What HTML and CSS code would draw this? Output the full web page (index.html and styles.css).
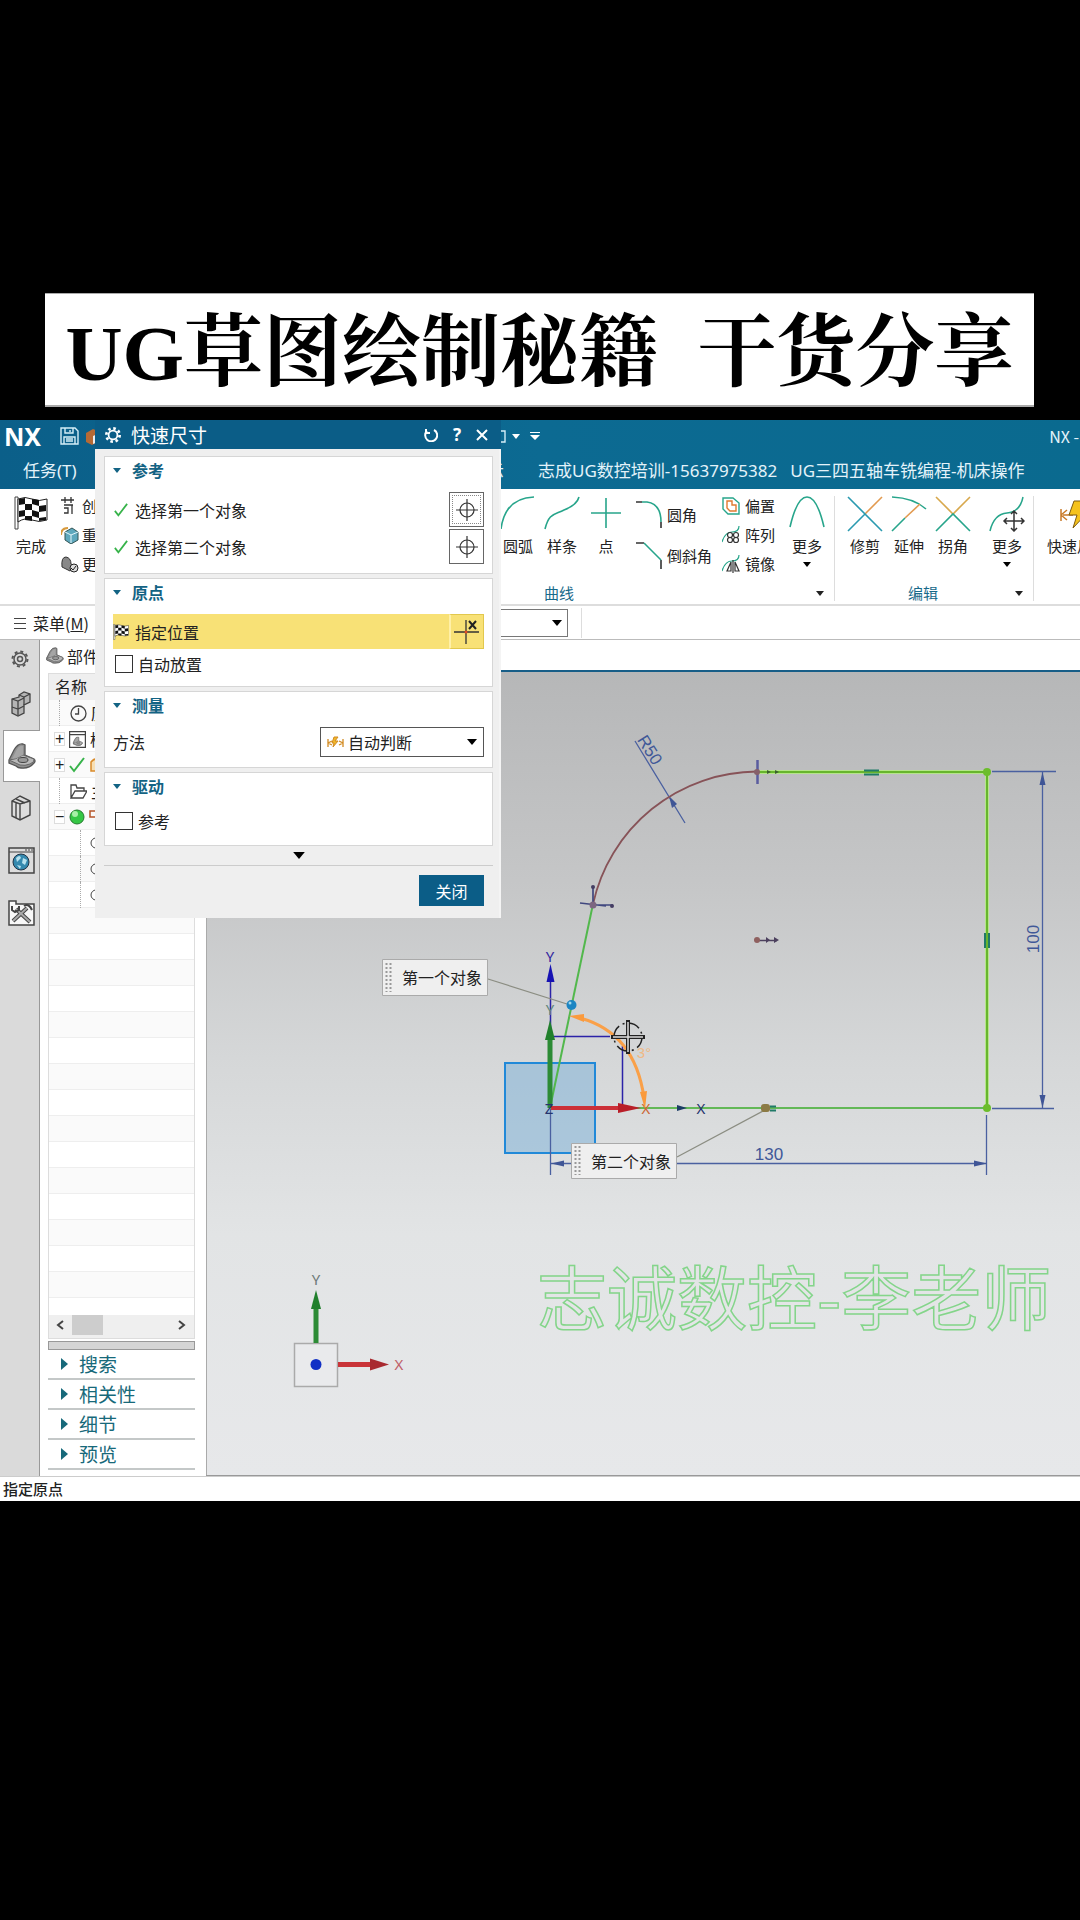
FILE: index.html
```html
<!DOCTYPE html>
<html lang="zh-CN">
<head>
<meta charset="utf-8">
<meta name="viewport" content="width=device-width, initial-scale=1">
<title>UG草图绘制秘籍</title>
<link rel="stylesheet" href="styles.css">
</head>
<body>
<svg class="defs" aria-hidden="true">
  <defs>
    <symbol id="tri-down" viewBox="0 0 10 6"><path d="M0 0h10L5 6z"/></symbol>
    <symbol id="tri-right" viewBox="0 0 7 12"><path d="M0 0v12L7 6z"/></symbol>
    <symbol id="flag" viewBox="0 0 34 34">
      <path d="M1 1h3v32H1z" fill="#fff" stroke="#444"/>
      <path d="M4 3q7-3 14 0t15 0v21q-8 3-15 0T4 26z" fill="#fff" stroke="#222"/>
      <path d="M5 3l6-1v6l-6 1zM18 3l7 1v6l-7-2zM11 8l7 0v6l-7 0zM25 10l7-1v6l-7 1zM5 15l6-1v6l-6 1zM18 14l7 2v6l-7-2zM11 20l7 0v5l-7-1zM25 22l7-1v3l-7 1z" fill="#111"/>
    </symbol>
    <symbol id="check" viewBox="0 0 16 16"><path d="M1 9l4 5L15 1" fill="none" stroke="#37b34a" stroke-width="2"/></symbol>
    <symbol id="target" viewBox="0 0 22 22"><g fill="none" stroke="#333" stroke-width="1.2"><circle cx="11" cy="11" r="7"/><path d="M11 0v22M0 11h22"/></g></symbol>
    <symbol id="part" viewBox="0 0 28 26">
      <path d="M1 17L6 7q4-7 9-6l2 1v10l9 4q2 2 0 4-5 6-13 5-3 0-5-2l-7-3z" fill="#8f8f8f" stroke="#555" stroke-width="1.300"/>
      <path d="M1 17q6 0 14-5l11 4q1 3-4 5t-10 1z" fill="#b9b9b9" stroke="#666"/>
      <path d="M4 16L8 8q3-6 7-5v9q-5 3-11 4z" fill="#a5a5a5"/>
      <ellipse cx="15" cy="17" rx="5" ry="2.500" fill="#999" stroke="#444"/>
    </symbol>
  </defs>
</svg>

<header class="banner"><h1>UG草图绘制秘籍  干货分享</h1></header>

<main class="app">
  <div class="titlebar">
    <strong class="logo">NX</strong>
    <button class="bare" aria-label="保存"><svg width="19" height="18" viewBox="0 0 19 18" fill="none" stroke="#d5eef8" stroke-width="1.4"><path d="M1 1h14l3 3v13H1zM5 1v5h8V1M4 17v-7h11v7M6 12h7M6 14h7M10 3v2"/></svg></button>
    <svg class="cube" width="14" height="18" viewBox="0 0 14 18"><path d="M0 6l7-4 7 3v9l-8 4-6-3z" fill="#b66a35"/><path d="M7 9l7-3v8l-7 3z" fill="#eee"/></svg>
    <div class="quick">
      <svg width="6" height="13" viewBox="0 0 6 13" fill="none" stroke="#d5eef8" stroke-width="1.4"><path d="M0 1h5v11H0"/></svg>
      <svg class="light" width="8" height="5"><use href="#tri-down"/></svg>
      <svg class="light last" width="10" height="9" viewBox="0 0 10 9"><path d="M0 0h10v1H0zM0 3h10L5 8z"/></svg>
    </div>
    <span class="product">NX -</span>
  </div>
  <nav class="tabs">
    <a class="task" href="#">任务(T)</a>
    <a class="cut" href="#">示</a>
    <span class="promo">志成UG数控培训-15637975382</span>
    <span>UG三四五轴车铣编程-机床操作</span>
  </nav>

  <div class="ribbon">
    <div class="start">
      <button class="tool big"><svg width="34" height="34"><use href="#flag"/></svg><span>完成</span></button>
      <div class="stack three">
        <button class="row"><svg width="18" height="18" viewBox="0 0 18 18" fill="none" stroke="#333" stroke-width="1.3"><path d="M0 3h13M4 0v6M10 0v6M3 8h9M11 8v9M3 11h4v5H3"/></svg>创</button>
        <button class="row"><svg width="18" height="18" viewBox="0 0 18 18"><path d="M4 6l7-4 6 4v8l-7 4-6-4z" fill="#5fa8bd" stroke="#355"/><path d="M4 6l6 3 7-3M10 9v8" stroke="#e5f6fb" fill="none"/><path d="M0 9Q0 2 7 2" fill="none" stroke="#d89a3c" stroke-width="2"/></svg>重</button>
        <button class="row"><svg width="18" height="18" viewBox="0 0 18 18"><path d="M1 12Q0 2 5 2q5 1 5 7l4 3-5 4z" fill="#888" stroke="#333"/><circle cx="13" cy="13" r="4" fill="#ddd" stroke="#222"/><path d="M10 13l2 2 3-4" fill="none" stroke="#222"/></svg>更</button>
      </div>
    </div>
    <section class="group curves">
      <div class="tools">
        <button class="tool"><svg width="36" height="34" viewBox="0 0 36 34" fill="none" stroke="#27a58b" stroke-width="1.6"><path d="M1 33Q5 2 34 1"/></svg><span>圆弧</span></button>
        <button class="tool"><svg width="36" height="34" viewBox="0 0 36 34" fill="none" stroke="#27a58b" stroke-width="1.6"><path d="M1 33C5 17 10 19 20 14Q33 9 35 1"/></svg><span>样条</span></button>
        <button class="tool"><svg width="36" height="34" viewBox="0 0 36 34" fill="none" stroke="#27a58b" stroke-width="1.6"><path d="M18 2v30M3 17h30"/></svg><span>点</span></button>
        <div class="stack two">
          <button class="row"><svg width="28" height="28" viewBox="0 0 28 28" fill="none" stroke-width="1.6"><path d="M1 1h6M26 21v6" stroke="#333"/><path d="M7 1h5q14 2 14 20" stroke="#27a58b"/></svg>圆角</button>
          <button class="row"><svg width="28" height="28" viewBox="0 0 28 28" fill="none" stroke-width="1.6"><path d="M1 1h8M26 18v9" stroke="#333"/><path d="M9 1l17 17" stroke="#27a58b"/></svg>倒斜角</button>
        </div>
        <div class="stack three">
          <button class="row"><svg width="18" height="18" viewBox="0 0 18 18" fill="none" stroke-width="1.4"><path d="M1 1h10l6 5v11H6l-5-5z" stroke="#27a58b"/><path d="M5 4h5v4h4v6H8l-3-3z" stroke="#e07a30"/></svg>偏置</button>
          <button class="row"><svg width="18" height="18" viewBox="0 0 18 18" fill="none" stroke-width="1.2"><path d="M0 16Q3 6 10 6T17 0" stroke="#27a58b"/><g stroke="#333"><circle cx="8" cy="9" r="2.500"/><circle cx="14" cy="9" r="2.500"/><circle cx="8" cy="14" r="2.500"/><circle cx="14" cy="14" r="2.500"/></g></svg>阵列</button>
          <button class="row"><svg width="18" height="18" viewBox="0 0 18 18" fill="none" stroke-width="1.2"><path d="M0 16Q3 6 10 6T17 0" stroke="#27a58b"/><path d="M5 16h4V7zM13 7v9h4zM11 5v13" stroke="#333"/></svg>镜像</button>
        </div>
        <button class="tool more"><svg width="36" height="32" viewBox="0 0 36 32" fill="none" stroke="#27a58b" stroke-width="1.6"><path d="M1 31Q8 1 18 1T35 31"/></svg><span>更多</span><svg width="8" height="5"><use href="#tri-down"/></svg></button>
      </div>
      <footer><span>曲线</span><svg width="8" height="5"><use href="#tri-down"/></svg></footer>
    </section>
    <section class="group edit">
      <div class="tools">
        <button class="tool"><svg width="36" height="36" viewBox="0 0 36 36" fill="none" stroke-width="1.6"><path d="M18 18L35 1" stroke="#e29a50"/><path d="M1 35l17-17M1 1l34 34" stroke="#2a9ab0"/></svg><span>修剪</span></button>
        <button class="tool"><svg width="36" height="36" viewBox="0 0 36 36" fill="none" stroke-width="1.6"><path d="M1 1q22 1 34 12" stroke="#27a58b"/><path d="M1 35l13-13" stroke="#27a58b"/><path d="M14 22L29 8" stroke="#e29a50"/></svg><span>延伸</span></button>
        <button class="tool"><svg width="36" height="36" viewBox="0 0 36 36" fill="none" stroke-width="1.6"><path d="M1 1l17 17L35 1" stroke="#d8a84c"/><path d="M1 35l17-17 17 17" stroke="#27a58b"/></svg><span>拐角</span></button>
        <button class="tool more"><svg width="36" height="36" viewBox="0 0 36 36" fill="none" stroke-width="1.5"><path d="M1 35Q5 18 18 17T34 1" stroke="#27a58b"/><path d="M25 15v20M15 25h20M22 18l3-3 3 3M22 32l3 3 3-3M18 22l-3 3 3 3M32 22l3 3-3 3" stroke="#333"/></svg><span>更多</span><svg width="8" height="5"><use href="#tri-down"/></svg></button>
      </div>
      <footer><span>编辑</span><svg width="8" height="5"><use href="#tri-down"/></svg></footer>
    </section>
    <section class="group measure">
      <button class="tool wide"><svg width="36" height="34" viewBox="0 0 36 34"><path d="M2 13v12M2 19l6-5M2 19l6 5M4 19h10" stroke="#c97a28" fill="none" stroke-width="1.5"/><path d="M15 5h13l-6 9h9L14 32l4-13h-8z" fill="#f5c21c" stroke="#7d5a10"/></svg><span>快速尺寸</span></button>
    </section>
  </div>

  <div class="menubar">
    <button class="menu"><svg width="12" height="12" viewBox="0 0 12 12" stroke="#444"><path d="M0 1.500h12M0 6.500h12M0 11.500h12"/></svg><span>菜单(<u>M</u>)</span></button>
    <button class="combo" aria-label="选择范围"><svg width="10" height="6"><use href="#tri-down"/></svg></button>
    <i class="divider"></i>
  </div>

  <div class="workspace">
    <nav class="rail">
      <button aria-label="设置"><svg width="18" height="18" viewBox="0 0 18 18" fill="none" stroke="#555" stroke-width="1.5"><circle cx="9" cy="9" r="2.500"/><circle cx="9" cy="9" r="6"/><circle cx="9" cy="9" r="7.500" stroke-dasharray="3 2.900" stroke-width="2"/></svg></button>
      <button aria-label="装配"><svg width="20" height="26" viewBox="0 0 20 26" fill="#b5b5b5" stroke="#444" stroke-width="1.300"><path d="M1 8l7-2V4l5-3 6 2v8l-6 3v8l-6 3-6-3z"/><path d="M1 8l6 2 6-3M7 10v14M1 16l6 2 6-3M8 4l5 2 6-3M13 6v8" fill="none"/></svg></button>
      <button class="active" aria-label="部件导航器"><svg width="28" height="26"><use href="#part"/></svg></button>
      <button aria-label="重用库"><svg width="20" height="26" viewBox="0 0 20 26" fill="#ddd" stroke="#444" stroke-width="1.400"><path d="M1 6l8-5 10 5v14l-10 5-8-4z"/><path d="M1 6l8 3 10-3M9 9v16M5 4l9 4M5 8v15" fill="none"/></svg></button>
      <button aria-label="浏览器"><svg width="27" height="27" viewBox="0 0 27 27"><path d="M1 1h25v25H1z" fill="#ddd" stroke="#444" stroke-width="1.500"/><path d="M1 5h25M17 3h2M20 3h2M23 3h2" stroke="#444"/><circle cx="13" cy="15" r="8" fill="#3489ae" stroke="#234"/><path d="M8 11q4-4 5 0l-4 4zM15 11l4 2-2 5-3-2zM9 18l4 1-1 3z" fill="#b6e1ee"/></svg></button>
      <button aria-label="工具"><svg width="27" height="27" viewBox="0 0 27 27"><path d="M1 26V2h7v3h18v21z" fill="#f8f8f8" stroke="#444" stroke-width="1.500"/><path d="M5 22L19 9M8 10l14 13" stroke="#444" stroke-width="4"/><path d="M5 22L19 9M8 10l14 13" stroke="#aaa" stroke-width="2"/><path d="M4 7v4l3 2 4-2V7M16 7q5-3 8 4" fill="none" stroke="#444" stroke-width="2"/></svg></button>
    </nav>

    <aside class="panel">
      <h2><svg width="18" height="17"><use href="#part"/></svg>部件</h2>
      <div class="tree">
        <div class="colhead">名称</div>
        <ul>
          <li class="leaf"><svg width="17" height="17" viewBox="0 0 17 17" fill="none" stroke="#444" stroke-width="1.300"><circle cx="8.500" cy="8.500" r="7.500"/><path d="M8.500 3v6H5"/></svg>历</li>
          <li><b>+</b><svg width="17" height="17" viewBox="0 0 28 28"><path d="M1 1h26v26H1zM1 6h26" fill="#fff" stroke="#444" stroke-width="2"/><use href="#part" x="6" y="9" width="17" height="16"/></svg>模</li>
          <li><b>+</b><svg width="16" height="16"><use href="#check"/></svg><svg width="14" height="14" viewBox="0 0 14 14"><path d="M2 13V4q4-5 10-2v11z" fill="#f7dfb4" stroke="#d98b2a" stroke-width="1.500"/></svg></li>
          <li class="leaf"><svg width="17" height="15" viewBox="0 0 17 15" fill="none" stroke="#444" stroke-width="1.300"><path d="M1 14V1h5l1 3h7v3M1 14L5 7h12l-4 7z"/></svg>主</li>
          <li><b>−</b><svg width="16" height="16" viewBox="0 0 16 16"><circle cx="8" cy="8" r="7" fill="#35c745" stroke="#267b30"/><circle cx="6" cy="5" r="3" fill="#a7f0a7"/></svg><svg width="12" height="14" viewBox="0 0 12 14" fill="none" stroke="#b5562a" stroke-width="1.500"><path d="M1 1h11v6H1zM8 7v5"/></svg></li>
          <li class="deep"><svg width="14" height="12" viewBox="0 0 14 12" fill="none" stroke="#444"><circle cx="7" cy="6" r="5"/></svg></li>
          <li class="deep"><svg width="14" height="12" viewBox="0 0 14 12" fill="none" stroke="#444"><circle cx="7" cy="6" r="5"/></svg></li>
          <li class="deep"><svg width="14" height="12" viewBox="0 0 14 12" fill="none" stroke="#444"><circle cx="7" cy="6" r="5"/></svg></li>
        </ul>
        <div class="scroll">
          <svg width="8" height="10" viewBox="0 0 8 10" fill="none" stroke="#444" stroke-width="2"><path d="M7 1L2 5l5 4"/></svg>
          <i></i>
          <svg width="8" height="10" viewBox="0 0 8 10" fill="none" stroke="#444" stroke-width="2"><path d="M1 1l5 4-5 4"/></svg>
        </div>
      </div>
      <div class="splitter"></div>
      <div class="folds">
        <button><svg width="7" height="12"><use href="#tri-right"/></svg>搜索</button>
        <button><svg width="7" height="12"><use href="#tri-right"/></svg>相关性</button>
        <button><svg width="7" height="12"><use href="#tri-right"/></svg>细节</button>
        <button><svg width="7" height="12"><use href="#tri-right"/></svg>预览</button>
      </div>
    </aside>

    <div class="view">
      <svg class="drawing" viewBox="207 672 873 803">
        <!-- outlined lettering -->
        <text x="537" y="1325" class="sketch-text">志诚数控-李老师</text>

        <!-- work plane and dimensions -->
        <rect x="505" y="1063" width="90" height="90" fill="#79b0d8" fill-opacity=".5" stroke="#2189d8" stroke-width="2"/>
        <g stroke="#4a60a0" stroke-width="1.300" fill="none">
          <path d="M992 771.500h64M992 1108.500h62M1042.500 772v336M550.500 1108v67M986.500 1115v60M551 1163.500h436M635 741l50 82"/>
        </g>
        <g fill="#3f5596">
          <path d="M1042.500 772l3 13h-6zM1042.500 1108l3-13h-6zM551 1163.500l13-3v6zM987 1163.500l-13-3v6zM669 796l8 8-5 4z"/>
        </g>
        <g class="dim">
          <text x="769" y="1160">130</text>
          <text transform="translate(1039 939) rotate(-90)">100</text>
          <text transform="translate(645 753) rotate(58)">R50</text>
        </g>

        <!-- sketch profile -->
        <path d="M593 904A169 169 0 0 1 757 771.500" fill="none" stroke="#875358" stroke-width="1.800"/>
        <path d="M550 1108L593 904" stroke="#52b84c" stroke-width="2"/>
        <path d="M550 1108h437" stroke="#63b857" stroke-width="2"/>
        <path d="M757 772h230v336" fill="none" stroke="#b5e58a" stroke-width="4"/>
        <path d="M757 772h230v336" fill="none" stroke="#67b52e" stroke-width="2"/>
        <circle cx="987" cy="772" r="4" fill="#6cbd2c"/><circle cx="987" cy="1108" r="4" fill="#6cbd2c"/>
        <path d="M864 770.500h15M864 774.500h15M985 933v15M989 933v15M770 1106.500h6M770 1110.500h6" stroke="#207a68" stroke-width="2"/>
        <path d="M757.500 760v24" stroke="#5a5c9f" stroke-width="2.500"/>
        <circle cx="757" cy="772" r="3" fill="#86606a"/>
        <path d="M767 770l4 2-4 2zM775 770l4 2-4 2z" fill="#3c6030"/>
        <path d="M757 940.500h20" stroke="#4c405e" stroke-width="1.500"/><circle cx="757" cy="940" r="3" fill="#8f605f"/><path d="M766 937l4 3-4 3zM774 937l5 3-5 3z" fill="#4c405e"/>
        <path d="M580 903l26 3M593 904V886M593 905h20" stroke="#40477f" stroke-width="1.700"/><circle cx="593" cy="905" r="3.500" fill="#7c6680"/><circle cx="593" cy="887" r="2" fill="#443d62"/><circle cx="612" cy="906" r="2" fill="#443d62"/>

        <!-- coordinate axes -->
        <path d="M550.500 1108V975M554 1036.500h56M622.500 1046v62" fill="none" stroke="#2b22a8" stroke-width="1.500"/>
        <path d="M550.500 964l4 18h-8z" fill="#1712b3"/>
        <path d="M550 1108v-70" stroke="#2c8b35" stroke-width="5"/><path d="M550 1020l5 20h-10z" fill="#20802c"/>
        <path d="M551 1108h68" stroke="#cc3038" stroke-width="4"/><path d="M641 1108l-23-5v10z" fill="#b91e28"/>
        <path d="M677 1105l10 3-10 3z" fill="#1c3d66"/>
        <g class="axis">
          <text x="550" y="962" fill="#3328a0">Y</text><text x="550" y="1015" fill="#64877b">Y</text>
          <text x="701" y="1114" fill="#25346e">X</text><text x="646" y="1114" fill="#cc6937">X</text>
          <text x="549" y="1114" fill="#25346e">Z</text>
        </g>

        <!-- angular dimension being placed -->
        <path d="M580 1018Q635 1033 644 1098" fill="none" stroke="#faa048" stroke-width="3"/>
        <path d="M569 1016l15-2v8zM645 1109l-5-17 7-1z" fill="#fa9a3c"/>
        <text x="644" y="1058" class="angle">3°</text>
        <g fill="none" stroke="#222"><circle cx="628" cy="1037" r="14" stroke-width="1.500" stroke-dasharray="12 4 2 4"/><path d="M628 1020v34M611 1037h34" stroke-width="4"/><path d="M628 1022v30M613 1037h30" stroke="#ddd" stroke-width="1.500"/></g>

        <!-- selected object callouts -->
        <path d="M488 979l79 25M677 1157l88-47" stroke="#8b8d82" stroke-width="1.200"/>
        <circle cx="571.500" cy="1005" r="5" fill="#1b85c3"/><circle cx="570" cy="1003" r="1.500" fill="#9fd7ee"/>
        <rect x="761" y="1104" width="9" height="8" rx="3" fill="#8c7b45"/>
        <g fill="#efefef" stroke="#aaa"><path d="M382.500 959.500h105v36h-105zM571.500 1143.500h105v35h-105z"/></g>
        <path d="M386.500 963v29M390.500 963v29M575.500 1146v29M579.500 1146v29" stroke="#999" stroke-width="2" stroke-dasharray="2 2"/>
        <g class="callout"><text x="402" y="984">第一个对象</text><text x="591" y="1168">第二个对象</text></g>

        <!-- view triad -->
        <rect x="294.500" y="1343.500" width="43" height="43" fill="#e9eaec" stroke="#aaa" stroke-width="1.500"/>
        <circle cx="316" cy="1364.500" r="5.500" fill="#1230c5"/>
        <path d="M316 1343v-36" stroke="#2c8b35" stroke-width="5"/><path d="M316 1290l5 19h-10z" fill="#20802c"/>
        <path d="M338 1364.500h35" stroke="#c93438" stroke-width="5"/><path d="M389 1364.500l-19-6v12z" fill="#a92a30"/>
        <g class="axis"><text x="316" y="1285" fill="#6d7a78">Y</text><text x="399" y="1370" fill="#c06068">X</text></g>
      </svg>
    </div>
  </div>
  <div class="status">指定原点</div>

  <form class="dialog" aria-label="快速尺寸">
    <div class="dialog-title">
      <svg width="16" height="16" viewBox="0 0 18 18" fill="none" stroke="#fff" stroke-width="2"><circle cx="9" cy="9" r="5"/><circle cx="9" cy="9" r="7.500" stroke-dasharray="2.900 3" stroke-width="3"/></svg>
      <h2>快速尺寸</h2>
      <button type="button" class="bare" aria-label="重置"><svg width="14" height="14" viewBox="0 0 14 14" fill="none" stroke="#fff" stroke-width="2"><path d="M3 3a6 6 0 1 0 7-1M2 1v4h4"/></svg></button>
      <button type="button" class="bare help">?</button>
      <button type="button" class="bare" aria-label="关闭窗口"><svg width="12" height="12" viewBox="0 0 12 12" stroke="#fff" stroke-width="2"><path d="M1 1l10 10M11 1L1 11"/></svg></button>
    </div>
    <section class="card">
      <h3><svg width="8" height="5"><use href="#tri-down"/></svg>参考</h3>
      <div class="pick"><svg width="16" height="14"><use href="#check"/></svg><span>选择第一个对象</span><button type="button" class="focus" aria-label="选择第一个对象"><svg width="22" height="22"><use href="#target"/></svg></button></div>
      <div class="pick"><svg width="16" height="14"><use href="#check"/></svg><span>选择第二个对象</span><button type="button" aria-label="选择第二个对象"><svg width="22" height="22"><use href="#target"/></svg></button></div>
    </section>
    <section class="card">
      <h3><svg width="8" height="5"><use href="#tri-down"/></svg>原点</h3>
      <div class="pick hot"><svg width="16" height="18"><use href="#flag"/></svg><span>指定位置</span><button type="button" aria-label="指定位置"><svg width="26" height="26" viewBox="0 0 26 26" fill="none"><path d="M12 1v24M0 13h25" stroke="#333" stroke-width="1.300"/><path d="M15 2l7 8M22 2l-7 8" stroke="#222" stroke-width="2"/><circle cx="12" cy="13" r="1.500" fill="#e54c21"/></svg></button></div>
      <label class="tick"><input type="checkbox">自动放置</label>
    </section>
    <section class="card">
      <h3><svg width="8" height="5"><use href="#tri-down"/></svg>测量</h3>
      <div class="field"><label for="method">方法</label>
        <div class="choice"><svg width="17" height="12" viewBox="0 0 17 12" fill="none" stroke="#d28b22" stroke-width="1.300"><path d="M1 3v8M1 7l4-2M1 7l4 2M16 3v8M16 7l-4-2M16 7l-4 2"/><path d="M7 1h4L8 5h3l-5 6 1-4H5z" fill="#f0b82a" stroke-width="1"/></svg><select id="method"><option>自动判断</option></select><svg width="10" height="6"><use href="#tri-down"/></svg></div>
      </div>
    </section>
    <section class="card">
      <h3><svg width="8" height="5"><use href="#tri-down"/></svg>驱动</h3>
      <label class="tick"><input type="checkbox">参考</label>
    </section>
    <button type="button" class="expand" aria-label="展开"><svg width="12" height="7" viewBox="0 0 10 6"><path d="M0 0h10L5 6z"/></svg></button>
    <div class="actions"><button type="button">关闭</button></div>
  </form>
</main>
</body>
</html>
```
FILE: styles.css
```css
* { box-sizing: border-box; }

body {
  margin: 0;
  min-height: 100vh;
  background: #000;
  color: #222;
  font: 16px/20px "Noto Sans CJK SC", sans-serif;
}

h1, h2, h3, ul { margin: 0; padding: 0; }
button, select, input { font: inherit; color: inherit; margin: 0; }
button { border: 0; padding: 0; background: none; }
svg { display: block; flex: none; }
a { color: inherit; text-decoration: none; }
.defs { position: absolute; width: 0; height: 0; }

/* headline above the recording */
.banner {
  margin: 293px 46px 13px 45px;
  padding-top: 8px;
  border: 2px solid #aaa;
  border-width: 1px 0 2px;
  background: #fff;
  text-align: center;
}
.banner h1 {
  color: #000;
  font: 700 79px/103px "Liberation Serif", "Noto Serif CJK SC", "Noto Sans CJK SC", serif;
  white-space: pre;
}

.app { position: relative; overflow: hidden; background: #fff; }

/* title bar and tabs */
.titlebar, .tabs {
  display: flex;
  align-items: center;
  background: linear-gradient(90deg, #0b5f89, #0c6a92 50%, #0a6a8f);
  color: #e4f3fa;
  white-space: nowrap;
}
.titlebar { height: 35px; padding: 0 0 3px 4px; }
.logo { width: 56px; font: 700 25px/30px "Noto Sans", sans-serif; color: #fff; }
.cube { margin-left: 7px; }
.quick { display: flex; align-items: center; gap: 6px; margin-left: 400px; }
.light { fill: #fff; }
.light.last { margin-left: 4px; }
.product { margin-left: auto; padding-right: 1px; }
.tabs { height: 34px; padding-bottom: 2px; font: 17px/24px "Noto Sans", "Noto Sans CJK SC", sans-serif; }
.task { width: 487px; padding-left: 23px; }
.cut { width: 51px; }
.promo { margin-right: 13px; }

/* ribbon */
.ribbon {
  display: flex;
  height: 117px;
  padding-top: 7px;
  border-bottom: 2px solid #ddd;
  font-size: 15px;
  white-space: nowrap;
  overflow: hidden;
}
.start { display: flex; gap: 12px; flex: none; width: 500px; padding-left: 13px; }
.group { display: flex; flex-direction: column; flex: none; height: 105px; border-right: 1px solid #ddd; }
.curves { width: 335px; }
.edit { width: 199px; padding-left: 12px; }
.measure { padding-left: 13px; border: 0; }
.tools { display: flex; gap: 8px; height: 88px; }
.tool { display: flex; flex-direction: column; align-items: center; width: 36px; height: 76px; }
.tool span { margin-top: auto; margin-bottom: 16px; line-height: 20px; }
.tool.more span { margin-bottom: 6px; }
.tool.more { height: 71px; }
.tool.wide { width: 60px; }
.edit .more { margin-left: 10px; }
.stack { display: flex; flex-direction: column; }
.stack .row { display: flex; align-items: center; gap: 4px; }
.three { padding-right: 6px; }
.start .three { padding: 0; }
.three .row { height: 29px; gap: 5px; margin-top: -5px; margin-bottom: 5px; }
.start .row { gap: 3px; }
.curves .three { margin-left: -2px; }
.two { width: 84px; padding: 4px 0 0 3px; gap: 12px; }
.two .row { height: 29px; }
.group footer { display: flex; align-items: center; margin-top: auto; padding-right: 10px; color: #17698a; line-height: 16px; }
.group footer svg { margin-left: auto; fill: #222; }
.curves footer { padding-left: 44px; }
.edit footer { padding-left: 61px; }

.menubar { display: flex; align-items: center; height: 34px; border-bottom: 1px solid #bbb; }
.menu { display: flex; align-items: center; gap: 7px; width: 480px; padding-left: 14px; text-align: left; }
.combo { display: flex; justify-content: flex-end; align-items: center; width: 88px; height: 28px; padding-right: 5px; border: 1px solid #777; }
.divider { width: 1px; height: 30px; margin-left: 13px; background: #ddd; }

/* resource rail */
.workspace { display: grid; grid-template-columns: 40px 166px minmax(0, 1fr); }
.rail { display: flex; flex-direction: column; background: #dadada; border-right: 1px solid #999; padding-left: 3px; }
.rail button { display: flex; justify-content: center; align-items: center; height: 52px; }
.rail button:first-child { height: 38px; padding-right: 3px; }
.rail .active { margin-right: -1px; border: 1px solid #999; border-right: 0; background: #fff; }

/* part navigator */
.panel { display: flex; flex-direction: column; padding: 0 11px 0 8px; }
.panel h2 { display: flex; align-items: center; gap: 3px; height: 31px; margin: 0 0 2px -2px; font: inherit; white-space: nowrap; }
.tree {
  display: flex;
  flex-direction: column;
  flex: 1;
  border: 1px solid #ddd;
  background: repeating-linear-gradient(#fff 0 25px, #eee 25px 26px, #fafafa 26px 51px, #eee 51px 52px);
}
.colhead { height: 26px; padding: 2px 6px; background: #efefef; }
.tree ul { list-style: none; }
.tree li { display: flex; align-items: center; gap: 4px; height: 26px; padding-left: 5px; white-space: nowrap; }
.tree b { width: 11px; font: 16px/12px "Liberation Sans", sans-serif; background: #fff; border: 1px solid #ddd; text-align: center; }
.tree .leaf { margin-left: 10px; padding-left: 10px; border-left: 1px dotted #aaa; }
.tree .deep { margin-left: 31px; padding-left: 8px; border-left: 1px dotted #aaa; }
.scroll { display: flex; align-items: center; gap: 8px; height: 23px; margin-top: auto; padding: 0 8px 3px 7px; background: #efefef; }
.scroll i { width: 31px; height: 20px; background: #cdcdcd; }
.scroll svg:last-child { margin-left: auto; }
.splitter { height: 9px; border: 1px solid #999; background: #d5d5d5; margin-top: 2px; }
.folds { padding-bottom: 6px; }
.folds button {
  display: flex; align-items: center; gap: 11px; width: 100%; height: 30px;
  padding-left: 13px; border-bottom: 2px solid #c4c8c8; color: #17697a; fill: #17697a; font-size: 19px;
}

/* graphics view */
.view { padding-top: 30px; border-bottom: 1px solid #999; }
.drawing {
  width: 100%;
  height: auto;
  border-top: 2px solid #175e88;
  border-left: 1px solid #aaa;
  background: linear-gradient(#b6b7b8 0%, #c5c6c7 26%, #d5d7d8 48%, #e2e4e5 70%, #e7e8ea 100%);
}
.sketch-text { fill: none; stroke: #84d58a; stroke-width: 1.5px; font-size: 70px; font-weight: 400; }
.dim { fill: #405898; font: 17px "Liberation Sans", sans-serif; text-anchor: middle; }
.axis { font: 15px "Noto Sans", sans-serif; text-anchor: middle; }
.angle { fill: #efb986; font: 15px "Liberation Sans", sans-serif; text-anchor: middle; }
.callout { fill: #222; font-size: 16px; }

.status { height: 25px; padding: 2px 3px; border-top: 1px solid #ccc; font-size: 15px; font-weight: 500; }

/* floating dimension dialog */
.dialog { position: absolute; top: 0; left: 95px; width: 406px; padding: 0 6px 12px 9px; background: #efefef; border-right: 2px solid #f4f4f4; }
.dialog-title {
  display: flex; align-items: center; gap: 15px; height: 29px; margin: 0 -8px 7px -9px;
  padding: 0 13px 0 10px; background: #0b5d87; color: #fff;
}
.dialog-title h2 { flex: 1; margin-left: -5px; font: 19px/26px "Noto Sans CJK SC", sans-serif; }
.help { font: 700 17px/20px "Noto Sans", sans-serif; }
.card { margin-bottom: 4px; padding: 3px 8px; border: 1px solid #d6d6d6; background: #fff; }
.card h3 { display: flex; align-items: center; gap: 11px; height: 20px; color: #136384; font-size: 16px; font-weight: 700; fill: #136384; }
.card:nth-of-type(1) { height: 118px; }
.card:nth-of-type(2) { height: 109px; }
.card:nth-of-type(3) { height: 77px; }
.card:nth-of-type(4) { height: 74px; margin: 0; }
.pick { display: flex; align-items: center; gap: 6px; height: 35px; margin-top: 2px; }
h3 + .pick { margin-top: 12px; }
.pick span { flex: 1; }
.pick button { display: flex; justify-content: center; align-items: center; width: 35px; height: 35px; border: 1px solid #666; }
.pick .focus { outline: 1px dotted #888; outline-offset: -4px; }
.hot { background: #f8e176; }
.hot button { border: 1px solid #e2c84d; border-left: 2px solid #fff0a8; }
.tick { display: flex; align-items: center; gap: 5px; margin: 5px 0 0 2px; }
h3 + .tick { margin-top: 15px; }
.tick input { appearance: none; width: 18px; height: 18px; border: 1px solid #333; background: #fff; }
.field { display: flex; justify-content: space-between; align-items: center; margin-top: 12px; }
.choice { display: flex; align-items: center; width: 164px; height: 30px; padding: 0 6px; border: 1px solid #555; }
.choice select { flex: 1; padding: 0 4px; appearance: none; border: 0; background: none; }
.expand { display: flex; justify-content: center; align-items: center; width: 100%; height: 20px; border-bottom: 1px solid #ccc; }
.actions { display: flex; justify-content: flex-end; padding: 9px 9px 0; }
.actions button { width: 65px; height: 31px; background: #0b5d87; color: #fff; }
```
